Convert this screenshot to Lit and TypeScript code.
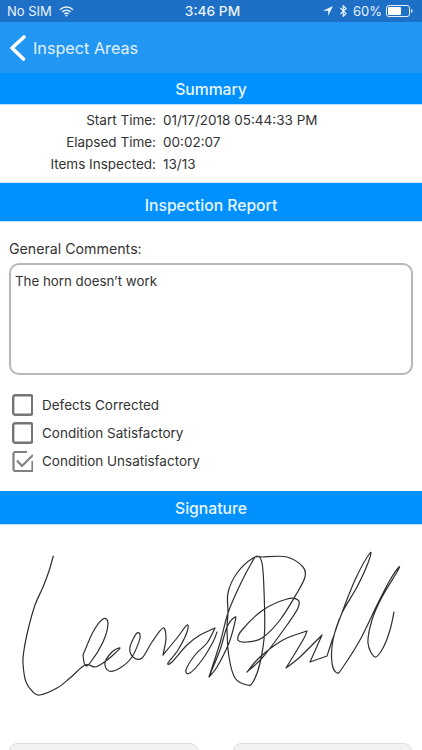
import { LitElement, html, css, svg } from "lit";
import { customElement } from "lit/decorators.js";

type P = [number, number];

// Each stroke is smoothed on its own; a new stroke starts wherever the pen turns sharply.
const STROKES: P[][] = [
  [[53.3,556],[49,571],[43,587],[35,605],[28,630],[24,650],[23,663],[26,682],[33,692],[40,695],[57,688],[70,678],[85,665],[95,667],[103,663],[112,656],[120,648],[112,652],[105,663],[109,671],[120,668],[132,657],[140,638],[137,633],[130,647],[133,657],[142,658],[152,642],[163,628],[166,638],[163,655]],
  [[83,655],[93,632],[103,619],[108,623],[103,642],[90,663],[85,665],[83,655]],
  [[163,655],[177,638],[187,625],[187,632],[178,650],[168,663],[172,662],[187,645],[200,635],[215,628]],
  [[215,628],[207,643],[195,655],[186,670],[190,673],[202,660],[213,642],[217,632]],
  [[209,677],[220,650],[227,627],[235,617],[235,622],[229,643],[217,667],[209,677]],
  [[209,677],[220,643],[228,613],[240,585],[252,562],[257,556],[262,563],[264,590],[264.5,633],[260,663],[253,682],[247,685],[235,678],[229,657],[227,630],[228,613],[228,593],[237,573],[253,558],[263,557],[287,557],[303,567],[305,577],[297,593],[280,620],[262,638],[247,642],[238,640],[242,630],[263,610],[287,599],[298,600],[298,608],[287,625],[263,657],[247,672]],
  [[247,672],[260,657],[283,640],[307,631]],
  [[307,631],[303,640],[286,668]],
  [[286,668],[300,657],[322,635]],
  [[322,635],[310,662]],
  [[310,662],[327,656]],
  [[327,656],[333,638],[340,618],[355,580],[370,553],[368,563],[357,587],[342,613],[333,640],[332,663],[337,673],[343,667],[360,640],[377,605],[390,580],[399,567],[397,572],[382,597],[372,620],[368,643],[375,657],[383,648],[390,630],[394,612]],
];

function smooth(p: P[]): string {
  let d = `M${p[0][0]} ${p[0][1]}`;
  for (let i = 0; i < p.length - 1; i++) {
    const a = p[i - 1] || p[i], b = p[i], c = p[i + 1], e = p[i + 2] || c;
    const c1 = [b[0] + (c[0] - a[0]) / 6, b[1] + (c[1] - a[1]) / 6];
    const c2 = [c[0] - (e[0] - b[0]) / 6, c[1] - (e[1] - b[1]) / 6];
    d += `C${c1[0].toFixed(1)} ${c1[1].toFixed(1)} ${c2[0].toFixed(1)} ${c2[1].toFixed(1)} ${c[0]} ${c[1]}`;
  }
  return d;
}

const SIGNATURE = STROKES.map(smooth).join("");

@customElement("app-root")
export class AppRoot extends LitElement {
  static styles = css`
    :host {
      display: block;
      width: 422px;
      height: 750px;
      overflow: hidden;
      background: #fff;
      font-family: Inter, "Liberation Sans", sans-serif;
      color: #333;
      font-size: 13.5px;
    }
    .status {
      height: 22px;
      background: #1e70c6;
      color: #e9f2fb;
      display: grid;
      grid-template-columns: 1fr auto 1fr;
      align-items: center;
      padding: 0 9px 0 7px;
      font-size: 13px;
    }
    .status-left { display: flex; align-items: center; gap: 7px; }
    .status-right { display: flex; align-items: center; justify-content: flex-end; gap: 0; }
    .time { font-weight: 500; font-size: 13.7px; margin-left: 5px; }
    .loc { margin-right: 7px; }
    .bt { margin-right: 6px; }
    .pct { margin-right: 4px; }
    .nav {
      height: 51px;
      background: #2196f3;
      display: flex;
      align-items: center;
      gap: 7px;
      padding: 0 0 0 9px;
      color: #e3f1fd;
      font-size: 16.2px;
    }
    .bar {
      background: #0091ff;
      color: #eaf6ff;
      font-weight: 500;
      font-size: 15.7px;
      display: flex;
      align-items: center;
      justify-content: center;
      border-bottom: 1px solid #b9dffb;
      box-sizing: border-box;
    }
    .b-summary { height: 32px; padding-top: 2px; }
    .b-report { height: 39px; padding-top: 6px; }
    .b-sign { height: 34px; padding-top: 2px; }
    .summary {
      height: 78px;
      box-sizing: border-box;
      padding-top: 4px;
      display: grid;
      grid-template-columns: 156px 1fr;
      grid-auto-rows: 22px;
      column-gap: 7px;
      align-items: center;
      border-bottom: 1px solid #cfe6f8;
    }
    .k { text-align: right; }
    .report {
      height: 269px;
      box-sizing: border-box;
      padding: 18px 9px 0;
      display: flex;
      flex-direction: column;
    }
    .lbl { height: 23px; line-height: 17px; font-size: 14.2px; }
    .area {
      height: 112px;
      box-sizing: border-box;
      border: 2px solid #b8b8b8;
      border-radius: 10px;
      padding: 7px 4px;
      line-height: 18px;
      font-size: 13.3px;
    }
    .checks {
      margin-top: 19px;
      padding-left: 3px;
      display: flex;
      flex-direction: column;
      gap: 6px;
    }
    .check { display: flex; align-items: center; gap: 9px; height: 22px; }
    .sign { height: 218px; }
    .sign svg { display: block; }
    .btns {
      display: grid;
      grid-template-columns: 189px 179px;
      column-gap: 35px;
      padding-left: 9px;
    }
    .btn {
      height: 30px;
      box-sizing: border-box;
      background: #f2f2f2;
      border: 1px solid #dedede;
      border-radius: 8px;
    }
  `;

  private box(checked: boolean) {
    return html`<svg width="21" height="22" viewBox="0 0 21 22" fill="none">
      ${checked
        ? svg`<path d="M15 2H3A1.6 1.6 0 0 0 1.500 3.500V19.500A1.600 1.600 0 0 0 3 21H19.500A1 1 0 0 0 20.500 20V11" stroke="#808080" stroke-width="2.200"/>
              <path d="M5 10.500L10 16L21 5" stroke="#808080" stroke-width="2.200"/>`
        : svg`<rect x="1.200" y="1.200" width="19" height="19.600" rx="2" stroke="#757575" stroke-width="2.400"/>`}
    </svg>`;
  }

  render() {
    return html`
      <div class="status">
        <div class="status-left">
          <span>No SIM</span>
          <svg width="15" height="11" viewBox="0 0 15 11" fill="none" stroke="#e9f2fb" stroke-width="1.500">
            <path d="M1 3.800C4.700 .2 10.300 .2 14 3.800"/>
            <path d="M3.300 6C5.700 3.700 9.300 3.700 11.700 6"/>
            <path d="M5.400 8C6.600 7 8.400 7 9.600 8"/>
            <path d="M7.500 10.800L6.300 9.300C7 8.900 8 8.900 8.700 9.300Z" fill="#e9f2fb" stroke="none"/>
          </svg>
        </div>
        <span class="time">3:46 PM</span>
        <div class="status-right">
          <svg class="loc" width="10" height="10" viewBox="0 0 10 10"><path d="M10 0L0 4.700H5.200V10Z" fill="#e9f2fb"/></svg>
          <svg class="bt" width="7" height="12" viewBox="0 0 7 12" fill="none" stroke="#e9f2fb" stroke-width="1.200">
            <path d="M.5 3L6 8.500L3.300 11.300V.7L6 3.500L.5 9"/>
          </svg>
          <span class="pct">60%</span>
          <svg width="27" height="12" viewBox="0 0 27 12" fill="none">
            <rect x=".5" y=".5" width="23" height="11" rx="2.500" stroke="#e9f2fb"/>
            <rect x="2" y="2" width="13" height="8" rx="1" fill="#fff"/>
            <path d="M25 4.300C26 4.500 26.500 5 26.500 6S26 7.500 25 7.700Z" fill="#e9f2fb"/>
          </svg>
        </div>
      </div>
      <div class="nav">
        <svg width="17" height="26" viewBox="0 0 17 26" fill="none">
          <path d="M15 2L3 13L14.500 24" stroke="#fff" stroke-width="3.600" stroke-linecap="round" stroke-linejoin="round"/>
        </svg>
        <span>Inspect Areas</span>
      </div>
      <div class="bar b-summary">Summary</div>
      <div class="summary">
        <span class="k">Start Time:</span><span>01/17/2018 05:44:33 PM</span>
        <span class="k">Elapsed Time:</span><span>00:02:07</span>
        <span class="k">Items Inspected:</span><span>13/13</span>
      </div>
      <div class="bar b-report">Inspection Report</div>
      <div class="report">
        <div class="lbl">General Comments:</div>
        <div class="area">The horn doesn’t work</div>
        <div class="checks">
          <div class="check">${this.box(false)}<span>Defects Corrected</span></div>
          <div class="check">${this.box(false)}<span>Condition Satisfactory</span></div>
          <div class="check">${this.box(true)}<span>Condition Unsatisfactory</span></div>
        </div>
      </div>
      <div class="bar b-sign">Signature</div>
      <div class="sign">
        <svg width="422" height="218" viewBox="0 525 422 218" fill="none">
          <path d="${SIGNATURE}" stroke="#2e2e2e" stroke-width="1.200" stroke-linecap="round" stroke-linejoin="round"/>
        </svg>
      </div>
      <div class="btns"><div class="btn"></div><div class="btn"></div></div>
    `;
  }
}
